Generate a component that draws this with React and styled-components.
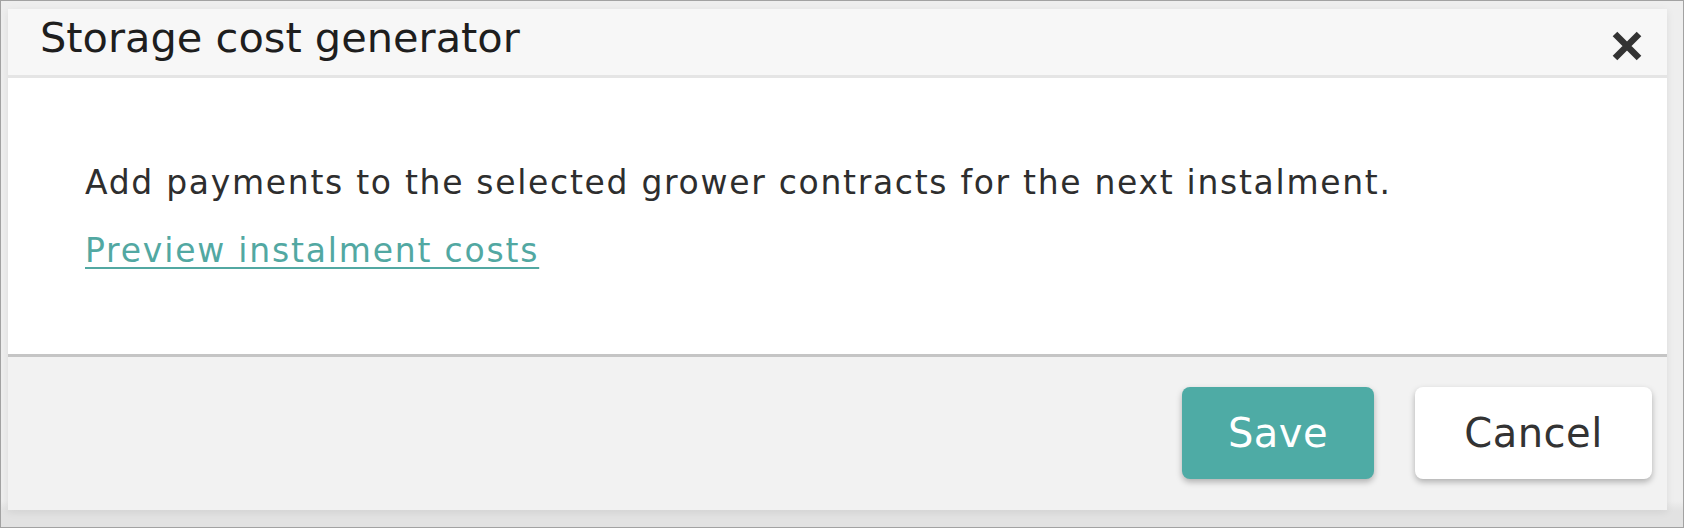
import React from 'react'
import styled, { createGlobalStyle } from 'styled-components'

const GlobalStyle = createGlobalStyle`
  html, body {
    margin: 0;
    padding: 0;
    background: #ececec;
  }
  * {
    box-sizing: border-box;
  }
`

const Frame = styled.div`
  width: 1684px;
  height: 528px;
  border: 1px solid #a2a2a2;
  background: linear-gradient(#eeeeee 0, #eeeeee 500px, #e2e2e2 510px);
  padding: 8px 16px 17px 7px;
  font-family: "DejaVu Sans", "Liberation Sans", sans-serif;
`

const Dialog = styled.div`
  display: flex;
  flex-direction: column;
  height: 100%;
  background: #ffffff;
  box-shadow: 0 2px 8px rgba(0, 0, 0, 0.08);
`

const Header = styled.div`
  display: flex;
  align-items: center;
  justify-content: space-between;
  height: 69px;
  padding: 0 24px 0 32px;
  background: #f7f7f7;
  border-bottom: 3px solid #e5e5e5;
`

const Title = styled.h1`
  margin: 0 0 8px 0;
  font-size: 41.5px;
  font-weight: 400;
  color: #1e1e1e;
  line-height: 1.15;
`

const CloseButton = styled.button`
  display: flex;
  align-items: center;
  justify-content: center;
  margin-top: 8px;
  padding: 0;
  border: none;
  background: transparent;
  cursor: pointer;
`

const Body = styled.div`
  height: 279px;
  padding: 71px 77px 0;
  background: #ffffff;
  border-bottom: 3px solid #c5c5c5;
`

const Text = styled.p`
  margin: 0;
  font-size: 33px;
  letter-spacing: 1.7px;
  line-height: 68px;
  color: #2e2e2e;
`

const Link = styled.a`
  display: block;
  font-size: 33px;
  letter-spacing: 1.8px;
  line-height: 68px;
  color: #52a8a2;
  text-decoration: underline;
  text-decoration-thickness: 2px;
  text-underline-offset: 5px;
  cursor: pointer;
`

const Footer = styled.div`
  flex: 1;
  display: flex;
  justify-content: flex-end;
  align-items: flex-start;
  gap: 41px;
  padding: 30px 15px 0;
  background: #f2f2f2;
`

const Button = styled.button`
  width: ${p => p.$width}px;
  height: 92px;
  border: none;
  border-radius: 8px;
  font-family: inherit;
  font-size: 40px;
  font-weight: 400;
  letter-spacing: 0.5px;
  cursor: pointer;
  background: ${p => (p.$primary ? '#4eaba5' : '#ffffff')};
  color: ${p => (p.$primary ? '#ffffff' : '#333333')};
  box-shadow: 0 3px 6px rgba(0, 0, 0, 0.28);
`

const CloseIcon = () => (
  <svg width="32" height="32" viewBox="0 0 32 32">
    <path d="M4 4 L28 28 M28 4 L4 28" stroke="#333333" strokeWidth="6.5" strokeLinecap="butt" fill="none" />
  </svg>
)

const App = () => {
  return (
    <>
      <GlobalStyle />
      <Frame>
        <Dialog>
          <Header>
            <Title>Storage cost generator</Title>
            <CloseButton aria-label="Close">
              <CloseIcon />
            </CloseButton>
          </Header>
          <Body>
            <Text>Add payments to the selected grower contracts for the next instalment.</Text>
            <Link>Preview instalment costs</Link>
          </Body>
          <Footer>
            <Button $primary $width={192}>Save</Button>
            <Button $width={237}>Cancel</Button>
          </Footer>
        </Dialog>
      </Frame>
    </>
  )
}

export default App
